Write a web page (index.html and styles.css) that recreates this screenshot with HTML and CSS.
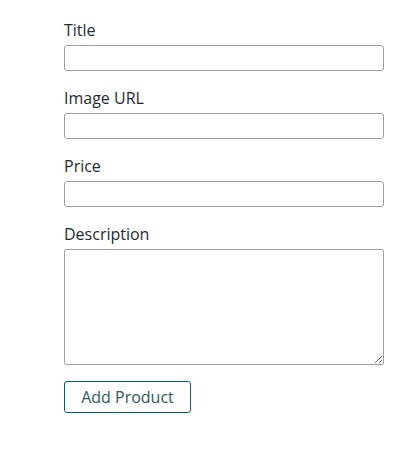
FILE: index.html
```html
<!DOCTYPE html>
<html lang="en">
<head>
    <meta charset="UTF-8">
    <title>Add Product</title>
    <link rel="stylesheet" href="styles.css">
</head>
<body>
    <form class="product-form">
        <div class="form-control">
            <label for="title">Title</label>
            <input type="text" id="title" name="title">
        </div>
        <div class="form-control">
            <label for="imageUrl">Image URL</label>
            <input type="text" id="imageUrl" name="imageUrl">
        </div>
        <div class="form-control">
            <label for="price">Price</label>
            <input type="text" id="price" name="price">
        </div>
        <div class="form-control">
            <label for="description">Description</label>
            <textarea id="description" name="description" rows="5"></textarea>
        </div>
        <button class="btn" type="submit">Add Product</button>
    </form>
</body>
</html>
```

FILE: styles.css
```css
body {
    font-family: "Open Sans", sans-serif;
    margin: 0;
    color: #1f2b33;
}
.product-form {
    width: 320px;
    padding: 18px 0 0 64px;
}
.form-control {
    margin-bottom: 15px;
}
.form-control label {
    display: block;
    font-size: 16px;
    line-height: 24px;
    margin-bottom: 3px;
}
.form-control input,
.form-control textarea {
    display: block;
    box-sizing: border-box;
    width: 320px;
    font: inherit;
    border: 1px solid #a1a1a1;
    border-radius: 3px;
    margin: 0;
}
.form-control input {
    height: 26px;
    padding: 0 6px;
}
.form-control textarea {
    height: 116px;
    border-radius: 2px;
    padding: 4px 6px;
}
.btn {
    font: inherit;
    font-size: 16px;
    color: #2c5a5a;
    background: #fff;
    border: 1px solid #00695c;
    border-radius: 3px;
    width: 127px;
    height: 32px;
    padding: 0;
    margin-top: 1px;
}
```
